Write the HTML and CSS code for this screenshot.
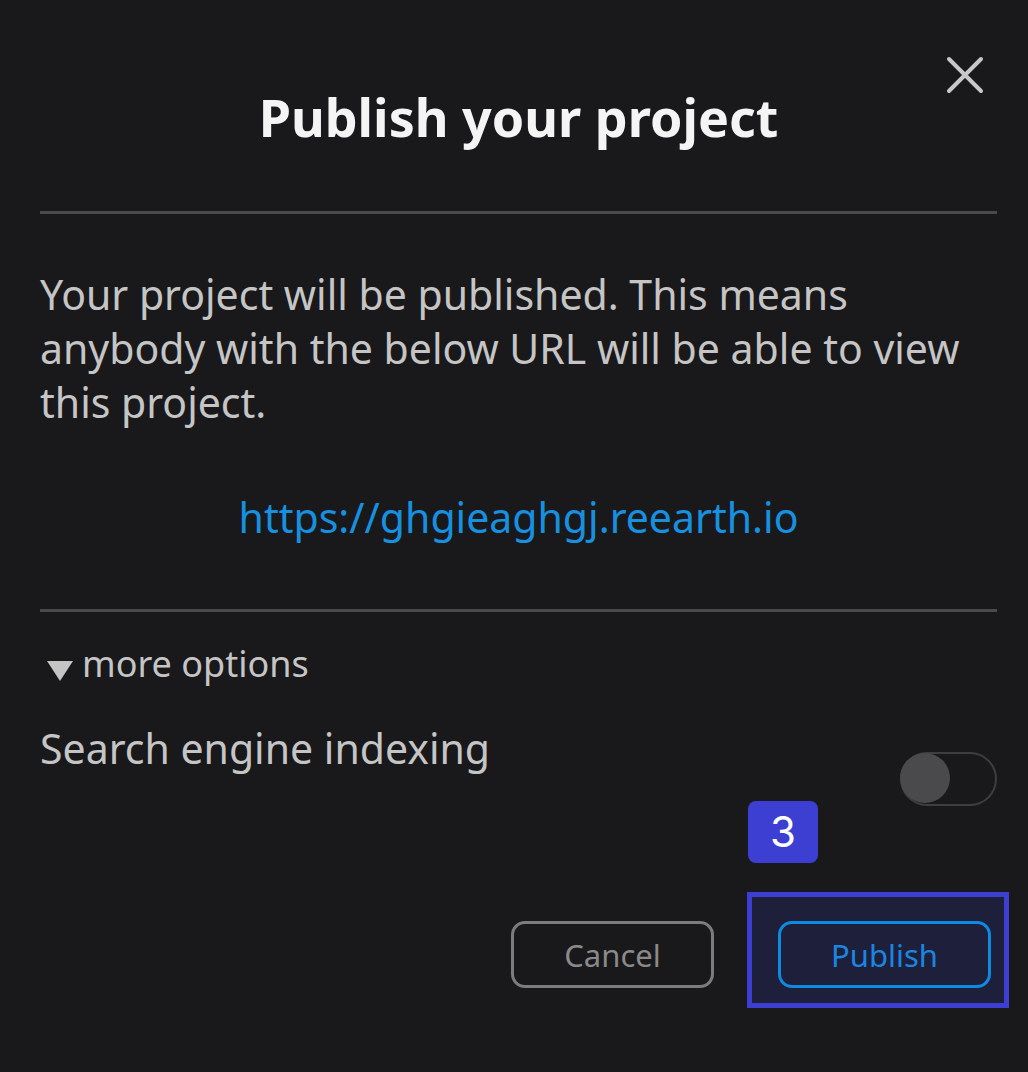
FILE: index.html
```html
<!DOCTYPE html>
<html lang="en">
<head>
<meta charset="utf-8">
<title>Publish your project</title>
<link rel="stylesheet" href="styles.css">
</head>
<body>
<div class="modal">
  <header class="modal-header">
    <h1 class="title">Publish your project</h1>
    <button class="close" aria-label="Close">
      <svg viewBox="0 0 40 40" width="40" height="40"><path d="M4 4 L36 36 M36 4 L4 36" stroke="#c8c8c8" stroke-width="4" stroke-linecap="round" fill="none"/></svg>
    </button>
  </header>
  <div class="divider"></div>
  <section class="body">
    <p class="desc">Your project will be published. This means anybody with the below URL will be able to view this project.</p>
    <a class="url" href="#">https://ghgieaghgj.reearth.io</a>
  </section>
  <div class="divider"></div>
  <section class="options">
    <div class="more"><span class="tri"></span><span>more options</span></div>
    <div class="setting">
      <span class="setting-label">Search engine indexing</span>
      <span class="toggle"><span class="knob"></span></span>
    </div>
  </section>
  <footer class="footer">
    <button class="btn btn-cancel">Cancel</button>
    <div class="highlight">
      <span class="badge">3</span>
      <button class="btn btn-publish">Publish</button>
    </div>
  </footer>
</div>
</body>
</html>
```

FILE: styles.css
```css
html, body {
  margin: 0;
  padding: 0;
  background: #19191c;
}
body {
  font-family: "Noto Sans", "Open Sans", sans-serif;
  color: #c5c5c5;
}
.modal {
  width: 957px;
  padding: 0 31px 0 40px;
}
.modal-header {
  position: relative;
  height: 211px;
  display: flex;
  align-items: flex-start;
  justify-content: center;
}
.title {
  margin: 82px 0 0;
  font-size: 52px;
  font-weight: 700;
  color: #f4f4f4;
  line-height: 70px;
}
.close {
  position: absolute;
  right: 12px;
  top: 55px;
  width: 40px;
  height: 40px;
  padding: 0;
  background: none;
  border: none;
}
.close svg { display: block; }
.divider {
  height: 3px;
  background: #4a4a4c;
}
.body {
  display: flex;
  flex-direction: column;
  padding: 53px 0 0;
}
.desc {
  margin: 0;
  font-size: 41px;
  line-height: 54px;
}
.url {
  align-self: center;
  margin: 61px 0 65px;
  font-size: 41px;
  line-height: 54px;
  color: #1890e0;
  text-decoration: none;
}
.options {
  padding-top: 28px;
}
.more {
  display: flex;
  align-items: flex-start;
  gap: 9px;
  font-size: 36px;
  line-height: 48px;
  padding-left: 7px;
}
.tri {
  width: 0;
  height: 0;
  border-left: 13px solid transparent;
  border-right: 13px solid transparent;
  border-top: 20px solid #c5c5c5;
  margin-top: 21px;
}
.setting {
  display: flex;
  justify-content: space-between;
  align-items: flex-start;
  margin-top: 32px;
}
.setting-label {
  font-size: 41px;
  line-height: 56px;
}
.toggle {
  margin-top: 32px;
  width: 93px;
  height: 50px;
  border: 2px solid #3e3e40;
  border-radius: 28px;
  position: relative;
  box-sizing: content-box;
}
.knob {
  position: absolute;
  left: -2px;
  top: -1px;
  width: 50px;
  height: 50px;
  border-radius: 50%;
  background: #4a4a4c;
}
.footer {
  display: flex;
  justify-content: flex-end;
  align-items: flex-end;
  gap: 33px;
  margin-top: 86px;
}
.btn {
  font-family: "Noto Sans", "Open Sans", sans-serif;
  font-size: 31px;
  height: 67px;
  border-radius: 14px;
  background: transparent;
  padding: 0;
}
.btn-cancel {
  width: 203px;
  border: 3px solid #7c7c7c;
  color: #8a8a8a;
  margin-bottom: 20px;
}
.highlight {
  position: relative;
  border: 5px solid #3d3fd2;
  background: #1e1f3b;
  padding: 24px 13px 15px 26px;
  margin-right: -12px;
}
.btn-publish {
  display: block;
  width: 213px;
  border: 3px solid #0e8ae0;
  color: #1a86e0;
}
.badge {
  position: absolute;
  left: -4px;
  top: -96px;
  width: 70px;
  height: 62px;
  border-radius: 8px;
  background: #3d3fd2;
  color: #ffffff;
  font-family: Inter, Roboto, sans-serif;
  font-size: 42px;
  line-height: 62px;
  text-align: center;
}
```
